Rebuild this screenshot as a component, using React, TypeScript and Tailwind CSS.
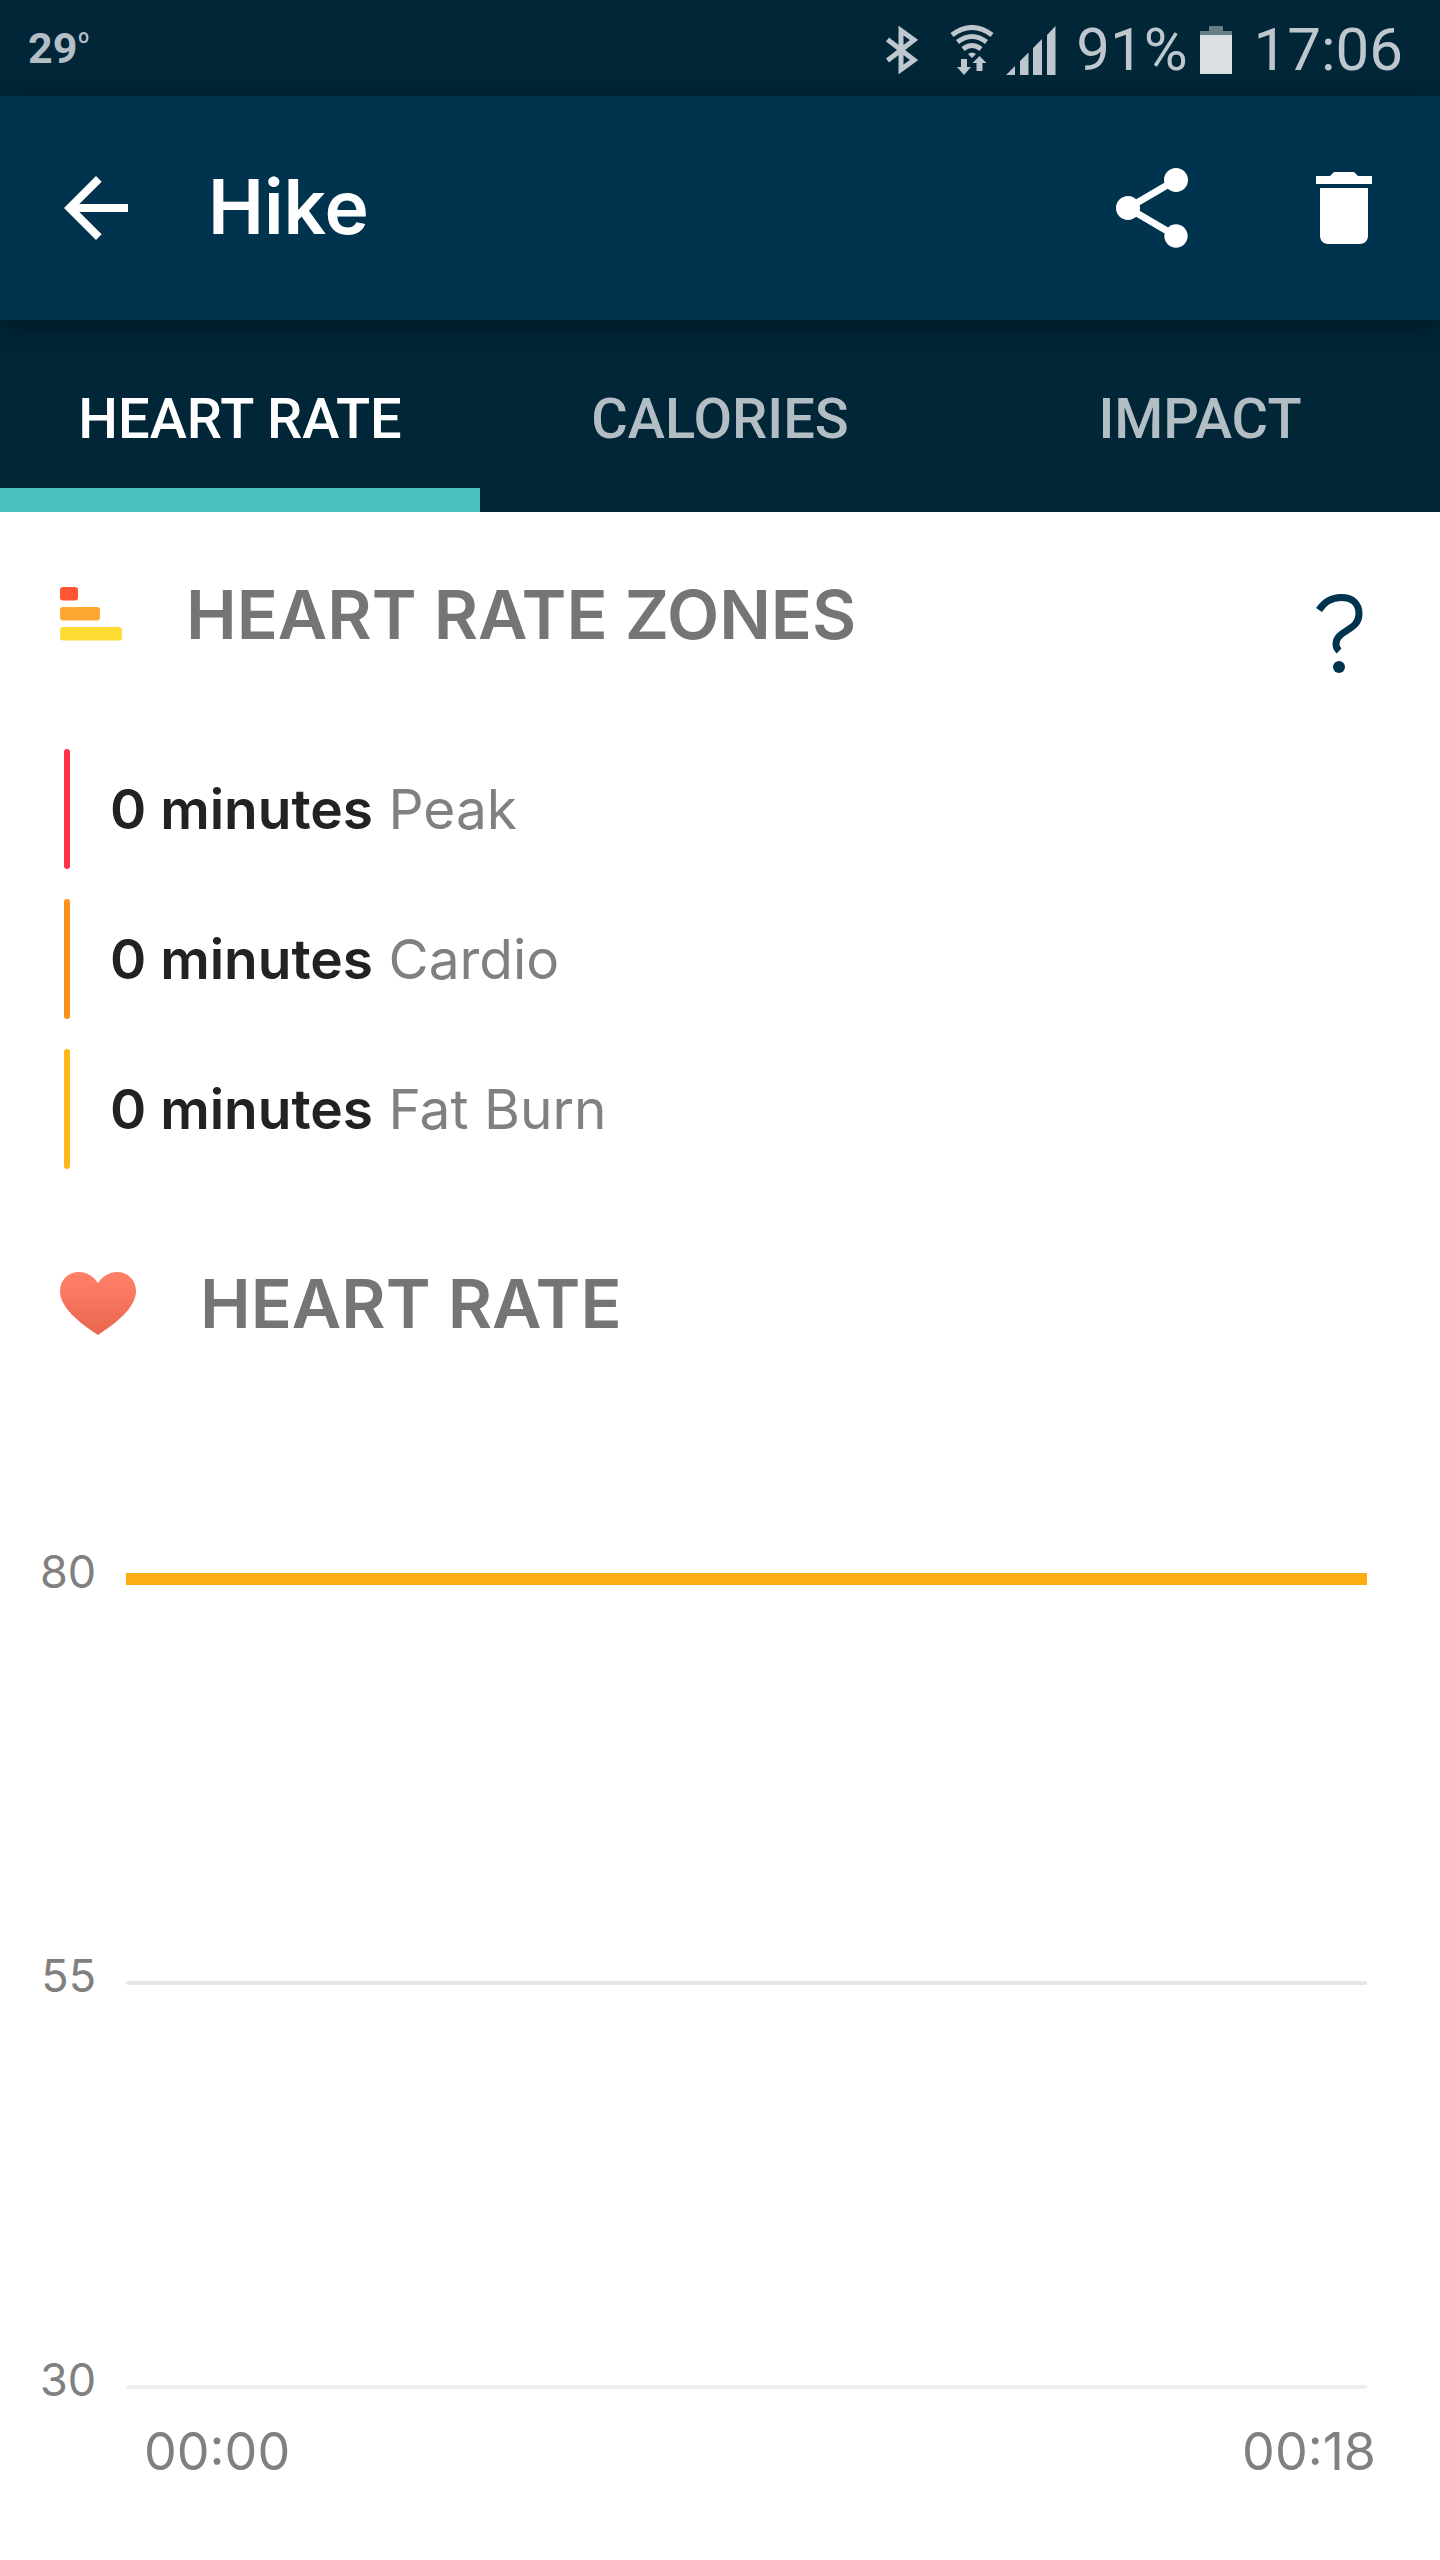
import { useState } from "react";
import { MdArrowBack, MdDelete, MdShare } from "react-icons/md";
import clsx from "clsx";

const tabs = ["Heart Rate", "Calories", "Impact"];

const zones = [
  { label: "Peak", minutes: 0, bar: "bg-[#ff3347]" },
  { label: "Cardio", minutes: 0, bar: "bg-[#ff8f17]" },
  { label: "Fat Burn", minutes: 0, bar: "bg-[#ffb616]" },
];

const gridLines = [
  { bpm: 80, line: "h-3 bg-[#fdac13]" },
  { bpm: 55, line: "h-1 rounded-full bg-[#e6e6e6]" },
  { bpm: 30, line: "h-1 rounded-full bg-[#eeeeee]" },
];

function BluetoothIcon() {
  return (
    <svg viewBox="0 0 32 48" className="h-12 w-8" fill="none" stroke="currentColor" strokeWidth="5" aria-label="Bluetooth">
      <path d="M1.5 13.5 28 34 15 43.5V4.5L28 14 1.5 34.5" />
    </svg>
  );
}

function WifiIcon() {
  return (
    <svg viewBox="0 0 44 50" className="h-[50px] w-11" fill="none" stroke="currentColor" strokeWidth="5" aria-label="Wi-Fi">
      <path d="M2 10Q22-5 42 10M7.5 17Q22 6 36.5 17M13 24Q22 17 31 24" />
      <g fill="currentColor" stroke="none">
        <path d="M18 29Q22 26 26 29L22 33Z" />
        <path d="M11 34H17V42H21L14 50 7 42H11Z" />
        <path d="M26.5 46V38H22.5L29.5 31 36.5 38H32.5V46Z" />
      </g>
    </svg>
  );
}

function SignalIcon() {
  return (
    <svg viewBox="0 0 50 49" className="h-[49px] w-[50px]" fill="currentColor" aria-label="Signal">
      <path d="M0 49 9 40V49ZM14 35 22.5 26.5V49H14ZM27 22 36 13V49H27ZM41 9 49.5 0V49H41Z" />
    </svg>
  );
}

function BatteryIcon() {
  return (
    <svg viewBox="0 0 32 48" className="h-12 w-8" aria-label="Battery">
      <path d="M0 5H9V0H23V5H32V9H0Z" fill="#667d88" />
      <path d="M0 9H32V48H0Z" fill="#d9dfe3" />
    </svg>
  );
}

function ZonesIcon() {
  return (
    <svg viewBox="0 0 62 54" className="h-[54px] w-[62px]" aria-hidden="true">
      <rect width="18" height="13.5" rx="3" fill="#ff5533" />
      <rect y="20" width="40" height="13.5" rx="3" fill="#ffa733" />
      <rect y="40" width="62" height="13.5" rx="3" fill="#ffdc33" />
    </svg>
  );
}

function HeartIcon() {
  return (
    <svg viewBox="0 0 76 63" className="h-[63px] w-[76px]" aria-hidden="true">
      <defs>
        <linearGradient id="heart" x1="0" y1="0" x2="0" y2="1">
          <stop offset="0" stopColor="#ff8169" />
          <stop offset="1" stopColor="#ea664e" />
        </linearGradient>
      </defs>
      <path
        fill="url(#heart)"
        d="M38 11C33 4 27 0 19 0 8 0 0 8 0 19 0 36 20 51 38 63 56 51 76 36 76 19 76 8 68 0 57 0 49 0 43 4 38 11Z"
      />
    </svg>
  );
}

function HelpIcon() {
  return (
    <svg viewBox="0 0 48 80" className="h-20 w-12" fill="none" stroke="#00334e" strokeWidth="7" aria-hidden="true">
      <path d="M3 16C9 7 16 3.5 25 3.5 37 3.5 43 10 43 20 43 37 20 36 20 50 20 53 21 55 23 57" />
      <circle cx="23" cy="73" r="6" fill="#00334e" stroke="none" />
    </svg>
  );
}

function StatusBar() {
  return (
    <div className="flex h-24 items-center justify-between bg-[#002638] pr-[37px] pl-7 font-[Roboto,sans-serif] text-[#bdc7cd]">
      <div className="flex items-start text-[43px] leading-none font-bold text-[#b3bec4]">
        29<span className="text-[28px] leading-8 font-medium">º</span>
      </div>
      <div className="flex items-center pt-1 text-[60px] leading-none">
        <BluetoothIcon />
        <span className="ml-8">
          <WifiIcon />
        </span>
        <span className="ml-3">
          <SignalIcon />
        </span>
        <span className="ml-5">91%</span>
        <span className="ml-3">
          <BatteryIcon />
        </span>
        <span className="ml-[22px]">17:06</span>
      </div>
    </div>
  );
}

function Header() {
  return (
    <header className="relative flex h-56 items-center bg-[#00334e] px-12 text-white shadow-[0_6px_24px_rgba(0,0,0,0.4)]">
      <button type="button" aria-label="Back">
        <MdArrowBack className="size-24" />
      </button>
      <h1 className="ml-16 flex-1 pb-1 text-[75px] leading-none font-semibold">Hike</h1>
      <div className="flex gap-24">
        <button type="button" aria-label="Share">
          <MdShare className="size-24" />
        </button>
        <button type="button" aria-label="Delete">
          <MdDelete className="size-24" />
        </button>
      </div>
    </header>
  );
}

export default function App() {
  const [active, setActive] = useState("Heart Rate");

  return (
    <div className="min-h-screen bg-white font-[Inter,sans-serif]">
      <StatusBar />
      <Header />

      <nav className="grid grid-cols-3 bg-[#002638] font-[Roboto,sans-serif]">
        {tabs.map((tab) => (
          <button
            key={tab}
            type="button"
            onClick={() => setActive(tab)}
            className={clsx(
              "h-48 border-b-24 pt-[30px] text-[56px] font-medium uppercase",
              active === tab ? "border-[#4cc1c1] text-white" : "border-transparent text-[#b3bec4]"
            )}
          >
            {tab}
          </button>
        ))}
      </nav>

      <main className="pt-[58px] pb-16">
        <section className="px-[60px]">
          <div className="flex items-start justify-between">
            <div className="flex h-[88px] items-center gap-16">
              <ZonesIcon />
              <h2 className="text-[68px] leading-none font-semibold text-[#757575]">HEART RATE ZONES</h2>
            </div>
            <button type="button" aria-label="About heart rate zones" className="mt-6 mr-4">
              <HelpIcon />
            </button>
          </div>

          <ul className="mt-[75px] flex flex-col gap-[30px] pl-1">
            {zones.map((z) => (
              <li key={z.label} className="flex h-[120px] items-center text-[55px]">
                <span className={clsx("h-full w-[6px] rounded-full", z.bar)} />
                <p className="ml-10 text-[#808080]">
                  <strong className="font-semibold text-[#222222]">{z.minutes} minutes</strong> {z.label}
                </p>
              </li>
            ))}
          </ul>
        </section>

        <section className="mt-[90px]">
          <div className="flex h-[88px] items-center gap-16 px-[60px]">
            <HeartIcon />
            <h2 className="text-[68px] leading-none font-semibold text-[#757575]">HEART RATE</h2>
          </div>

          <div className="mt-[200px] flex flex-col gap-[356px] pr-[73px] pl-10">
            {gridLines.map((g) => (
              <div key={g.bpm} className="flex h-12 items-center text-[#808080]">
                <span className="w-14 text-right text-[45px] leading-none">{g.bpm}</span>
                <div className="ml-[30px] flex-1 pt-4">
                  <div className={g.line} />
                </div>
              </div>
            ))}
          </div>

          <div className="mt-[10px] flex justify-between pr-16 pl-36 text-[52px] text-[#808080]">
            <span>00:00</span>
            <span>00:18</span>
          </div>
        </section>
      </main>
    </div>
  );
}
